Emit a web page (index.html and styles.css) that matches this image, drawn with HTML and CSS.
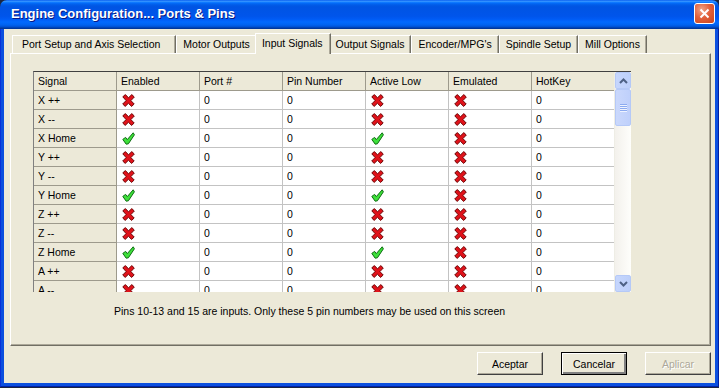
FILE: index.html
```html
<!DOCTYPE html>
<html lang="es">

<head>
    <meta charset="utf-8">
    <meta name="viewport" content="width=device-width, initial-scale=1.0">
    <title>Engine Configuration... Ports &amp; Pins</title>
    <link rel="stylesheet" href="styles.css">
</head>

<body>
    <svg class="defs" width="0" height="0">
        <symbol id="no" viewBox="0 0 13 13">
            <polygon points="0.8,2.8 3.4,0.6 6.5,3.8 9.8,0.6 12.3,3 8.9,6.6 12.2,10 9.6,12.4 6.4,9.3 3.2,12.4 0.7,10 4.1,6.6" fill="#e0121a" stroke="#6e0808" stroke-width="1" stroke-linejoin="round" />
        </symbol>
        <symbol id="si" viewBox="0 0 13 13">
            <polygon points="0.8,7.4 3.6,5.4 5.3,7.6 11.2,0.8 12.4,2.8 6.4,11.8 4.2,12.2" fill="#3ee03a" stroke="#0d6b12" stroke-width="1" stroke-linejoin="round" />
        </symbol>
    </svg>

    <div class="window">
        <div class="titlebar">
            <span class="title">Engine Configuration... Ports &amp; Pins</span>
            <span class="close">
                <svg width="11" height="11" viewBox="0 0 11 11">
                    <path d="M1.5 1.5 L9.5 9.5 M9.5 1.5 L1.5 9.5" stroke="#fff" stroke-width="2" />
                </svg>
            </span>
        </div>

        <div class="frame">
            <div class="client">
                <nav class="tabs">
                    <span class="tab first">Port Setup and Axis Selection</span>
                    <span class="tab">Motor Outputs</span>
                    <span class="tab selected">Input Signals</span>
                    <span class="tab">Output Signals</span>
                    <span class="tab">Encoder/MPG's</span>
                    <span class="tab">Spindle Setup</span>
                    <span class="tab">Mill Options</span>
                </nav>

                <section class="panel">
                    <div class="grid">
                        <div class="rows">
                            <table>
                                <tr>
                                    <th>Signal</th>
                                    <th>Enabled</th>
                                    <th>Port #</th>
                                    <th>Pin Number</th>
                                    <th>Active Low</th>
                                    <th>Emulated</th>
                                    <th>HotKey</th>
                                </tr>
                                <tr>
                                    <td class="sig">X ++</td>
                                    <td><svg class="ico"><use href="#no" /></svg></td>
                                    <td>0</td>
                                    <td>0</td>
                                    <td><svg class="ico"><use href="#no" /></svg></td>
                                    <td><svg class="ico"><use href="#no" /></svg></td>
                                    <td>0</td>
                                </tr>
                                <tr>
                                    <td class="sig">X --</td>
                                    <td><svg class="ico"><use href="#no" /></svg></td>
                                    <td>0</td>
                                    <td>0</td>
                                    <td><svg class="ico"><use href="#no" /></svg></td>
                                    <td><svg class="ico"><use href="#no" /></svg></td>
                                    <td>0</td>
                                </tr>
                                <tr>
                                    <td class="sig">X Home</td>
                                    <td><svg class="ico"><use href="#si" /></svg></td>
                                    <td>0</td>
                                    <td>0</td>
                                    <td><svg class="ico"><use href="#si" /></svg></td>
                                    <td><svg class="ico"><use href="#no" /></svg></td>
                                    <td>0</td>
                                </tr>
                                <tr>
                                    <td class="sig">Y ++</td>
                                    <td><svg class="ico"><use href="#no" /></svg></td>
                                    <td>0</td>
                                    <td>0</td>
                                    <td><svg class="ico"><use href="#no" /></svg></td>
                                    <td><svg class="ico"><use href="#no" /></svg></td>
                                    <td>0</td>
                                </tr>
                                <tr>
                                    <td class="sig">Y --</td>
                                    <td><svg class="ico"><use href="#no" /></svg></td>
                                    <td>0</td>
                                    <td>0</td>
                                    <td><svg class="ico"><use href="#no" /></svg></td>
                                    <td><svg class="ico"><use href="#no" /></svg></td>
                                    <td>0</td>
                                </tr>
                                <tr>
                                    <td class="sig">Y Home</td>
                                    <td><svg class="ico"><use href="#si" /></svg></td>
                                    <td>0</td>
                                    <td>0</td>
                                    <td><svg class="ico"><use href="#si" /></svg></td>
                                    <td><svg class="ico"><use href="#no" /></svg></td>
                                    <td>0</td>
                                </tr>
                                <tr>
                                    <td class="sig">Z ++</td>
                                    <td><svg class="ico"><use href="#no" /></svg></td>
                                    <td>0</td>
                                    <td>0</td>
                                    <td><svg class="ico"><use href="#no" /></svg></td>
                                    <td><svg class="ico"><use href="#no" /></svg></td>
                                    <td>0</td>
                                </tr>
                                <tr>
                                    <td class="sig">Z --</td>
                                    <td><svg class="ico"><use href="#no" /></svg></td>
                                    <td>0</td>
                                    <td>0</td>
                                    <td><svg class="ico"><use href="#no" /></svg></td>
                                    <td><svg class="ico"><use href="#no" /></svg></td>
                                    <td>0</td>
                                </tr>
                                <tr>
                                    <td class="sig">Z Home</td>
                                    <td><svg class="ico"><use href="#si" /></svg></td>
                                    <td>0</td>
                                    <td>0</td>
                                    <td><svg class="ico"><use href="#si" /></svg></td>
                                    <td><svg class="ico"><use href="#no" /></svg></td>
                                    <td>0</td>
                                </tr>
                                <tr>
                                    <td class="sig">A ++</td>
                                    <td><svg class="ico"><use href="#no" /></svg></td>
                                    <td>0</td>
                                    <td>0</td>
                                    <td><svg class="ico"><use href="#no" /></svg></td>
                                    <td><svg class="ico"><use href="#no" /></svg></td>
                                    <td>0</td>
                                </tr>
                                <tr>
                                    <td class="sig">A --</td>
                                    <td><svg class="ico"><use href="#no" /></svg></td>
                                    <td>0</td>
                                    <td>0</td>
                                    <td><svg class="ico"><use href="#no" /></svg></td>
                                    <td><svg class="ico"><use href="#no" /></svg></td>
                                    <td>0</td>
                                </tr>
                            </table>
                        </div>
                        <div class="scroll">
                            <span class="sbtn">
                                <svg width="9" height="6" viewBox="0 0 9 6"><path d="M1 5 L4.5 1.5 L8 5" fill="none" stroke="#4d6185" stroke-width="2" /></svg>
                            </span>
                            <span class="thumb">
                                <i></i><i></i><i></i><i></i>
                            </span>
                            <span class="track"></span>
                            <span class="sbtn">
                                <svg width="9" height="6" viewBox="0 0 9 6"><path d="M1 1 L4.5 4.5 L8 1" fill="none" stroke="#4d6185" stroke-width="2" /></svg>
                            </span>
                        </div>
                    </div>
                    <p class="note">Pins 10-13 and 15 are inputs. Only these 5 pin numbers may be used on this screen</p>
                </section>

                <div class="buttons">
                    <button class="knap">Aceptar</button>
                    <button class="knap standard">Cancelar</button>
                    <button class="knap" disabled>Aplicar</button>
                </div>
            </div>
        </div>
    </div>
</body>

</html>
```

FILE: styles.css
```css
* {
    box-sizing: border-box;
}

body {
    margin: 0;
    background: #1b2640;
    font-family: "Liberation Sans", Arial, sans-serif;
    font-size: 10.5px;
    color: #000;
}

.defs {
    position: absolute;
    width: 0;
    height: 0;
}

.window {
    width: 719px;
    height: 387px;
    display: flex;
    flex-direction: column;
}

/* title bar */

.titlebar {
    flex-shrink: 0;
    height: 29px;
    display: flex;
    align-items: center;
    justify-content: space-between;
    padding: 0 4px 2px 11px;
    border-radius: 7px 7px 0 0;
    background: linear-gradient(to bottom, #0058ee 0%, #3a93ff 4%, #288eff 6%, #127dff 8%, #036ffc 10%, #0262ee 14%, #0057e5 20%, #0054e3 24%, #0055eb 56%, #005bf5 66%, #026afe 76%, #0062ef 86%, #0052d6 92%, #0040ab 96%, #003092 100%);
}

.title {
    color: #fff;
    font-weight: bold;
    font-size: 13px;
    text-shadow: 1px 1px #0a1883;
}

.close {
    width: 21px;
    height: 21px;
    display: flex;
    align-items: center;
    justify-content: center;
    border: 1px solid #fff;
    border-radius: 3px;
    background: radial-gradient(circle at 35% 30%, #f0a488 0%, #e2613c 45%, #c8441c 100%);
}

/* frame + client */

.frame {
    flex: 1;
    display: flex;
    padding: 0 3px 3px;
    background: #0b4fdf;
    border-left: 1px solid #0831d9;
    border-right: 1px solid #001ea0;
    border-bottom: 1px solid #0020a8;
}

.client {
    flex: 1;
    display: flex;
    flex-direction: column;
    padding: 4px 4px 8px 6px;
    background: #ece9d8;
}

/* tabs */

.tabs {
    flex-shrink: 0;
    display: flex;
    align-items: flex-end;
    height: 20px;
    padding-left: 2px;
}

.tab {
    height: 18px;
    line-height: 16px;
    padding: 0 6px;
    border-top: 1px solid #fff;
    border-left: 1px solid #fff;
    border-right: 1px solid #716f64;
    box-shadow: inset -1px 0 #aca899;
    white-space: nowrap;
}

.tab.first {
    padding: 0 15px 0 9px;
}

.selected {
    position: relative;
    z-index: 1;
    height: 21px;
    margin: 0 -2px -1px;
    padding: 0 7px 0 6px;
    line-height: 18px;
    background: #ece9d8;
}

/* panel */

.panel {
    flex-shrink: 0;
    height: 293px;
    padding: 17px 0 0 22px;
    border-top: 1px solid #fff;
    border-left: 1px solid #fff;
    border-right: 1px solid #716f64;
    border-bottom: 1px solid #716f64;
    box-shadow: inset -1px -1px #aca899;
}

.grid {
    width: 598px;
    height: 221px;
    display: flex;
    border-top: 1px solid #404040;
    border-left: 1px solid #808080;
    background: #fff;
}

.rows {
    width: 580px;
    overflow: hidden;
}

table {
    width: 581px;
    table-layout: fixed;
    border-collapse: separate;
    border-spacing: 0;
}

th,
td {
    height: 19px;
    padding: 0 4px;
    border-right: 1px solid #c3c3c3;
    border-bottom: 1px solid #c3c3c3;
    text-align: left;
    font-weight: normal;
    white-space: nowrap;
    overflow: hidden;
}

th,
.sig {
    background: #ece9d8;
    border-color: #9d9a8c;
}

.ico {
    display: block;
    width: 13px;
    height: 13px;
    margin-left: 1px;
}

/* scrollbar */

.scroll {
    width: 17px;
    display: flex;
    flex-direction: column;
    background: linear-gradient(to right, #f3f1ec, #fefefb);
    border-left: 1px solid #eeede5;
}

.sbtn {
    height: 17px;
    display: flex;
    align-items: center;
    justify-content: center;
    border: 1px solid #b5c9f7;
    border-radius: 2px;
    background: linear-gradient(to right, #c6d6fd, #bccffa);
}

.thumb {
    height: 37px;
    display: flex;
    flex-direction: column;
    align-items: center;
    justify-content: center;
    gap: 1px;
    border: 1px solid #b5c9f7;
    border-radius: 2px;
    background: linear-gradient(to right, #cad8fc, #bfd0fb);
}

.thumb i {
    width: 7px;
    height: 1px;
    background: #8cabf0;
    box-shadow: 0 1px #eef3ff;
}

.track {
    flex: 1;
}

.note {
    margin: 13px 0 0 81px;
}

/* buttons */

.buttons {
    display: flex;
    justify-content: flex-end;
    gap: 18px;
    margin-top: 6px;
}

.knap {
    width: 66px;
    height: 23px;
    padding: 0;
    font-family: "Liberation Sans", Arial, sans-serif;
    font-size: 10.5px;
    color: #000;
    background: #ece9d8;
    border: 1px solid;
    border-color: #fff #404040 #404040 #fff;
    box-shadow: inset -1px -1px #aca899;
}

.standard {
    border: 1px solid #000;
    box-shadow: inset 1px 1px #fff, inset -2px -2px #808080;
}

.knap:disabled {
    color: #aca899;
    text-shadow: 1px 1px #fff;
}
```
